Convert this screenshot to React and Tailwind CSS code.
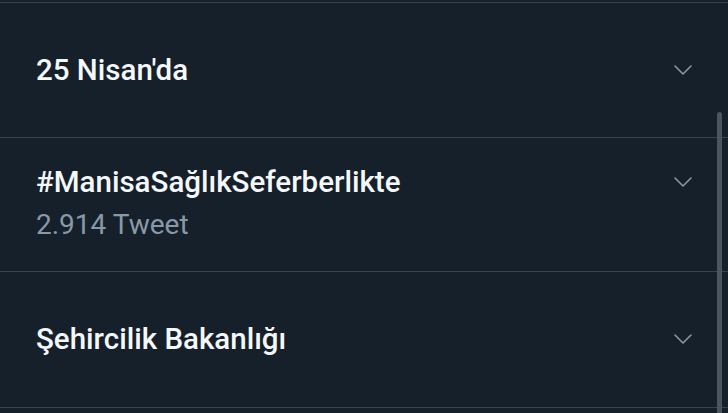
import React from 'react';

const Chevron = () => (
  <svg width="18" height="10" viewBox="0 0 18 10" fill="none" className="shrink-0">
    <path d="M1 1l8 8 8-8" stroke="#8899a6" strokeWidth="1.6" strokeLinecap="round" strokeLinejoin="round" />
  </svg>
);

const TrendRow = ({ title, count, className = '' }) => (
  <div className={`flex items-start justify-between pl-9 pr-9 border-b border-[#38444d] ${className}`}>
    <div className="flex flex-col">
      <span className="text-[29.5px] leading-[36px] font-medium text-[#f5f8fa]">{title}</span>
      {count && <span className="text-[28px] leading-[34px] mt-2 text-[#8899a6]">{count}</span>}
    </div>
    <div className="flex h-[36px] items-center">
      <Chevron />
    </div>
  </div>
);

export default function App() {
  return (
    <div
      className="relative h-[413px] w-[728px] overflow-hidden bg-[#15202b]"
      style={{ fontFamily: 'Roboto, "Noto Sans", sans-serif' }}
    >
      <div className="h-[2px]" />
      <div className="border-t border-[#38444d]" />
      <TrendRow title="25 Nisan'da" className="h-[135px] pt-[49px]" />
      <TrendRow title="#ManisaSağlıkSeferberlikte" count="2.914 Tweet" className="h-[134px] pt-[26px]" />
      <TrendRow title="Şehircilik Bakanlığı" className="h-[136px] pt-[49px]" />
      <div className="absolute right-[6px] top-[112px] h-[320px] w-[5px] rounded-full bg-[#4a5560]" />
    </div>
  );
}
